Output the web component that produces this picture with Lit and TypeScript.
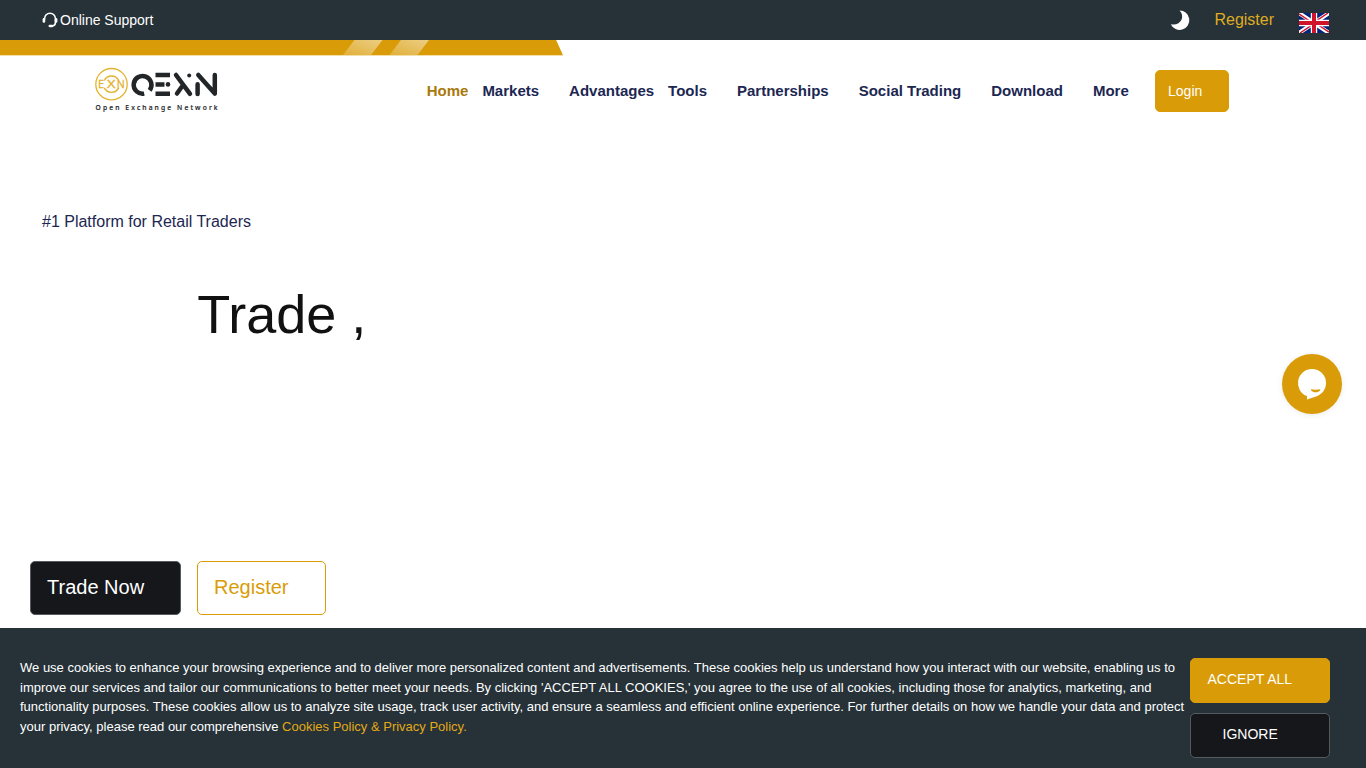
import { LitElement, html, css, svg } from "lit";
import { customElement } from "lit/decorators.js";

const NAV = [
  { label: "Home", active: true, tight: true },
  { label: "Markets" },
  { label: "Advantages", tight: true },
  { label: "Tools" },
  { label: "Partnerships" },
  { label: "Social Trading" },
  { label: "Download" },
  { label: "More" },
];

const headset = svg`
  <svg class="headset" width="16" height="16" viewBox="0 0 16 16" fill="none" stroke="#fff" stroke-linecap="round">
    <path d="M2.6 7.2V6.6a5.4 5.4 0 0 1 10.8 0v4.2a3 3 0 0 1-2.6 3" stroke-width="1.6"/>
    <path d="M1.9 7.4v2" stroke-width="2.6"/>
    <path d="M14.1 7.4v2" stroke-width="2.6"/>
    <path d="M7.8 14h2.2" stroke-width="2.6"/>
  </svg>`;

const moon = svg`
  <svg class="moon" width="20" height="20" viewBox="0 0 20 20">
    <path transform="translate(.8 0)" d="M9.800.5A9.700 9.700 0 1 1 1 14.200C5.500 15.500 10.200 13.400 11.800 9.600C13.100 6.400 12.200 2.800 9.800.5z" fill="#fff"/>
  </svg>`;

const flag = svg`
  <svg class="flag" width="30" height="20" viewBox="0 0 30 20">
    <rect width="30" height="20" fill="#00247d"/>
    <path d="M0 0L30 20M30 0L0 20" stroke="#fff" stroke-width="4"/>
    <path d="M0 .9L13.6 10M30 19.1L16.4 10M29 0L15 9.3M1 20L15 10.7" stroke="#cf142b" stroke-width="1.4"/>
    <path d="M15 0V20M0 10H30" stroke="#fff" stroke-width="6.4"/>
    <path d="M15 0V20M0 10H30" stroke="#cf142b" stroke-width="4"/>
  </svg>`;

const logo = svg`
  <svg class="logo" width="126" height="48" viewBox="0 0 126 48">
    <g fill="none" stroke="#e3b22e">
      <circle cx="17.500" cy="18.200" r="15.700" stroke-width="1.3"/>
      <path d="M10.300 14.500A8 8 0 0 1 24.700 14.500M10.300 21.900A8 8 0 0 0 24.700 21.900" stroke-width="1.4"/>
    </g>
    <g fill="#e3b22e" stroke="#e3b22e" stroke-width=".3" font-family="Open Sans, sans-serif" font-size="11">
      <text x="4" y="22.200">E</text>
      <text x="13" y="22.200" textLength="8.500" lengthAdjust="spacingAndGlyphs">X</text>
      <text x="22.800" y="22.200" textLength="8" lengthAdjust="spacingAndGlyphs">N</text>
    </g>
    <g fill="none" stroke="#232629" stroke-width="4.500">
      <path d="M50.200 27.600A8.900 8.900 0 1 1 55.600 24.300"/>
      <path d="M61.500 9H76M61.500 18.400H70.500M61.500 27.800H76"/>
      <g stroke-linecap="round" stroke-linejoin="round">
        <path d="M82 9L96 27.800M87.800 20.800L83 27.500"/>
        <path d="M103.600 18.200V28M104.300 9L120.800 27.500V9"/>
      </g>
    </g>
    <g fill="#232629">
      <circle cx="74" cy="18.400" r="2.300"/>
      <circle cx="95.200" cy="9.400" r="2"/>
    </g>
    <g transform="translate(1.5 43.700) scale(.86 1)" font-family="Noto Sans, sans-serif" font-size="7.800" font-weight="500" fill="#232629" stroke="#232629" stroke-width=".2">
      <text textLength="142" lengthAdjust="spacing">Open Exchange Network</text>
    </g>
  </svg>`;

const ribbon = svg`
  <svg class="ribbon" width="564" height="16" viewBox="0 0 564 16">
    <defs>
      <linearGradient id="sheen" x1="1" y1="0" x2="0" y2="1">
        <stop offset="0" stop-color="#fff" stop-opacity=".5"/>
        <stop offset="1" stop-color="#fff" stop-opacity=".2"/>
      </linearGradient>
    </defs>
    <path d="M0 0H556L563 15.500H0z" fill="#eabf58"/>
    <path d="M0 0H556L562.800 15H0z" fill="#d99c08"/>
    <path d="M354.500 0H382.500L371 15H343z" fill="url(#sheen)"/>
    <path d="M401 0H429L417.500 15H389.500z" fill="url(#sheen)"/>
  </svg>`;

const chat = svg`
  <svg width="60" height="60" viewBox="0 0 60 60">
    <path d="M30 15a14 14 0 0 1 14 14c0 7-4.500 11.500-10 13.600L25 45.600V42.100A14 14 0 0 1 30 15z" fill="#fff"/>
    <path d="M28.800 35.200c3 .6 6.500.6 9.600 0c-.6 4.200-8.800 4.200-9.600 0z" fill="#d99c08"/>
  </svg>`;

@customElement("app-root")
export class AppRoot extends LitElement {
  static styles = css`
    :host {
      display: flex;
      flex-direction: column;
      position: relative;
      width: 100%;
      height: 100vh;
      overflow: hidden;
      background: #fff;
      font-family: "Liberation Sans", Arial, sans-serif;
      color: #1c2752;
    }
    * { box-sizing: border-box; }
    svg { display: block; flex: none; overflow: visible; }
    a { color: inherit; text-decoration: none; }
    .topbar {
      display: flex;
      align-items: center;
      flex: none;
      height: 40px;
      padding: 0 37px 0 42px;
      background: #263238;
      color: #fff;
    }
    .support { display: flex; align-items: center; gap: 2px; font-size: 14px; }
    .tools { display: flex; align-items: center; margin-left: auto; }
    .tools a { margin: 0 25px; font-size: 16px; line-height: 18px; color: #dfac22; }
    .flag { margin-top: 6px; overflow: hidden; }
    .header {
      display: flex;
      align-items: center;
      height: 55px;
      padding-left: 94px;
    }
    .nav { display: flex; gap: 30px; margin: 14px 26.300px 0 206.700px; font-size: 15px; line-height: 18px; font-weight: 700; white-space: nowrap; }
    .tight { margin-right: -16px; }
    .active { color: #a9790c; }
    .logo { margin-top: 13px; }
    .btn {
      display: flex;
      align-items: center;
      border: 1px solid #d99c08;
      border-radius: 5px;
      background: #d99c08;
      color: #fff;
      font-family: inherit;
      margin: 0;
    }
    .login { width: 74px; height: 42px; margin-top: 15px; padding: 0 12px; font-size: 14px; }
    .hero { flex: 1; display: flex; flex-direction: column; min-height: 0; }
    .kicker { margin: 101px 0 0 42px; font-size: 16px; line-height: 20px; }
    h1 { margin: 51px 0 0 197.200px; font-size: 54px; line-height: 62px; font-weight: 400; color: #111; }
    .actions { display: flex; gap: 16px; margin: 216px 0 0 30px; }
    .actions .btn { height: 54px; padding: 0 16px 2px; font-size: 20px; }
    .dark, .actions .dark { background: #15171b; border-color: #565b60; }
    .trade { width: 151px; }
    .outline { width: 129px; background: #fff; color: #d99c08; }
    .cookies {
      display: flex;
      flex: none;
      height: 140px;
      padding: 30px 36px 0 20px;
      background: #263238;
      color: #fff;
    }
    .cookies p { width: 1170px; margin: 0; font-size: 13px; line-height: 19.5px; white-space: nowrap; }
    .cookies p a { color: #e3a917; }
    .choices { display: flex; flex-direction: column; gap: 10px; }
    .choices .btn { width: 140px; height: 45px; font-size: 14px; }
    .choices .accept { padding: 0 16.500px 4px; }
    .choices .ignore { padding: 0 31.500px 4px; }
    .chat {
      position: absolute;
      left: 1282px;
      top: 354px;
      width: 60px;
      height: 60px;
      border-radius: 50%;
      background: #d99c08;
      box-shadow: 0 1px 6px rgba(0, 0, 0, 0.08);
    }
  `;

  render() {
    return html`
      <div class="topbar">
        <a class="support">${headset}<span>Online Support</span></a>
        <div class="tools">${moon}<a>Register</a>${flag}</div>
      </div>
      ${ribbon}
      <header class="header">
        ${logo}
        <nav class="nav">
          ${NAV.map((n) => html`<a class="${n.active ? "active" : ""} ${n.tight ? "tight" : ""}">${n.label}</a>`)}
        </nav>
        <button class="btn login">Login</button>
      </header>
      <main class="hero">
        <div class="kicker">#1 Platform for Retail Traders</div>
        <h1>Trade ,</h1>
        <div class="actions">
          <button class="btn dark trade">Trade Now</button>
          <button class="btn outline">Register</button>
        </div>
      </main>
      <section class="cookies">
        <p>
          We use cookies to enhance your browsing experience and to deliver more personalized content and advertisements. These cookies help us understand how you interact with our website, enabling us to<br />
          improve our services and tailor our communications to better meet your needs. By clicking 'ACCEPT ALL COOKIES,' you agree to the use of all cookies, including those for analytics, marketing, and<br />
          functionality purposes. These cookies allow us to analyze site usage, track user activity, and ensure a seamless and efficient online experience. For further details on how we handle your data and protect<br />
          your privacy, please read our comprehensive <a>Cookies Policy &amp; Privacy Policy.</a>
        </p>
        <div class="choices">
          <button class="btn accept">ACCEPT ALL</button>
          <button class="btn dark ignore">IGNORE</button>
        </div>
      </section>
      <div class="chat">${chat}</div>
    `;
  }
}
